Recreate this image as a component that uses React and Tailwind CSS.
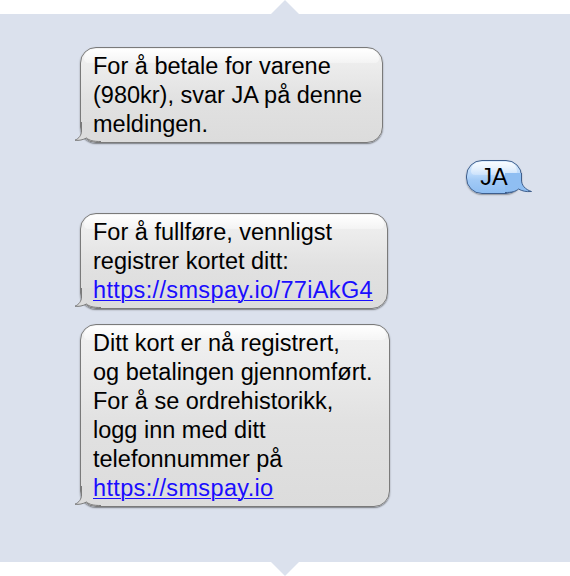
import React from "react";

const FONT = { fontFamily: '"Liberation Sans", Arial, Helvetica, sans-serif' };

function GrayTail() {
  return (
    <svg
      className="absolute left-[-7px] bottom-[-1px]"
      width="30"
      height="24"
      viewBox="0 0 30 24"
    >
      <path
        d="M7.5 3 L7.5 12 C7.5 16 5 19.5 1 21.2 C5 21.8 9 20.8 12.5 19 C15.5 21.5 19 22.5 27 22.5 L27 3 Z"
        fill="#dcdcdc"
      />
      <path
        d="M7.5 3 L7.5 12 C7.5 16 5 19.5 1 21.2 C5 21.8 9 20.8 12.5 19 C15.5 21.5 19 22.5 27 22.5"
        fill="none"
        stroke="#7a7a7a"
        strokeWidth="1"
      />
    </svg>
  );
}

function BlueTail() {
  return (
    <svg
      className="absolute right-[-12px] bottom-[-1px]"
      width="30"
      height="24"
      viewBox="0 0 30 24"
    >
      <path
        d="M18.5 3 L18.5 10 C18.5 15 22 19.5 28.5 21.5 C23 22 19 21 15.5 19 C12.5 21.5 9 22.5 2 22.5 L2 3 Z"
        fill="#8fbef2"
      />
      <path
        d="M18.5 3 L18.5 10 C18.5 15 22 19.5 28.5 21.5 C23 22 19 21 15.5 19 C12.5 21.5 9 22.5 2 22.5"
        fill="none"
        stroke="#3e5e8c"
        strokeWidth="1"
      />
    </svg>
  );
}

function GrayBubble({ width, children }) {
  return (
    <div
      className="relative rounded-[16px] border border-[#7a7a7a] bg-[linear-gradient(to_bottom,#f2f2f2_0%,#e9e9e9_30%,#e1e1e1_55%,#dcdcdc_100%)] shadow-[0_1px_1.5px_rgba(0,0,0,0.45)]"
      style={{ width }}
    >
      <div className="pointer-events-none absolute left-[3px] right-[3px] top-[1px] h-[14px] rounded-t-[14px] rounded-b-[6px] bg-[linear-gradient(to_bottom,rgba(255,255,255,0.95),rgba(255,255,255,0.35))]" />
      <GrayTail />
      <div className="relative whitespace-nowrap pl-[12px] pr-[8px] pt-[4px] pb-[3px] text-[23.5px] leading-[29px] text-black">
        {children}
      </div>
    </div>
  );
}

function Link({ children }) {
  return (
    <span className="tracking-[0.35px] text-[#1a0dff] underline decoration-1 underline-offset-[2px]">
      {children}
    </span>
  );
}

export default function App() {
  return (
    <div className="flex w-[570px] flex-col items-stretch bg-white" style={FONT}>
      <div className="flex h-[14px] justify-center">
        <div className="h-0 w-0 border-x-[14px] border-b-[14px] border-x-transparent border-b-[#dbe1ed]" />
      </div>
      <div className="flex h-[548px] flex-col bg-[#dbe1ed] pt-[33px]">
        <div className="pl-[80px]">
          <GrayBubble width={303}>
            For å betale for varene
            <br />
            (980kr), svar JA på denne
            <br />
            meldingen.
          </GrayBubble>
        </div>
        <div className="mt-[17px] flex justify-end pr-[48px]">
          <div className="relative h-[34px] w-[56px] rounded-[16px] border border-[#3e5e8c] bg-[linear-gradient(to_bottom,#dcedfe_0%,#bcdafb_40%,#a2caf6_60%,#8fbef2_100%)] shadow-[0_1px_1.5px_rgba(0,0,0,0.35)]">
            <div className="pointer-events-none absolute left-[4px] right-[4px] top-[1px] h-[13px] rounded-t-[13px] rounded-b-[6px] bg-[linear-gradient(to_bottom,rgba(255,255,255,0.8),rgba(255,255,255,0.25))]" />
            <BlueTail />
            <div className="relative flex h-full items-center justify-center text-[23.5px] leading-[29px] text-black">
              JA
            </div>
          </div>
        </div>
        <div className="mt-[19px] pl-[80px]">
          <GrayBubble width={308}>
            For å fullføre, vennligst
            <br />
            registrer kortet ditt:
            <br />
            <Link>https://smspay.io/77iAkG4</Link>
          </GrayBubble>
        </div>
        <div className="mt-[15px] pl-[80px]">
          <GrayBubble width={310}>
            Ditt kort er nå registrert,
            <br />
            og betalingen gjennomført.
            <br />
            For å se ordrehistorikk,
            <br />
            logg inn med ditt
            <br />
            telefonnummer på
            <br />
            <Link>https://smspay.io</Link>
          </GrayBubble>
        </div>
      </div>
      <div className="flex h-[14px] justify-center">
        <div className="h-0 w-0 border-x-[14px] border-t-[14px] border-x-transparent border-t-[#dbe1ed]" />
      </div>
    </div>
  );
}
